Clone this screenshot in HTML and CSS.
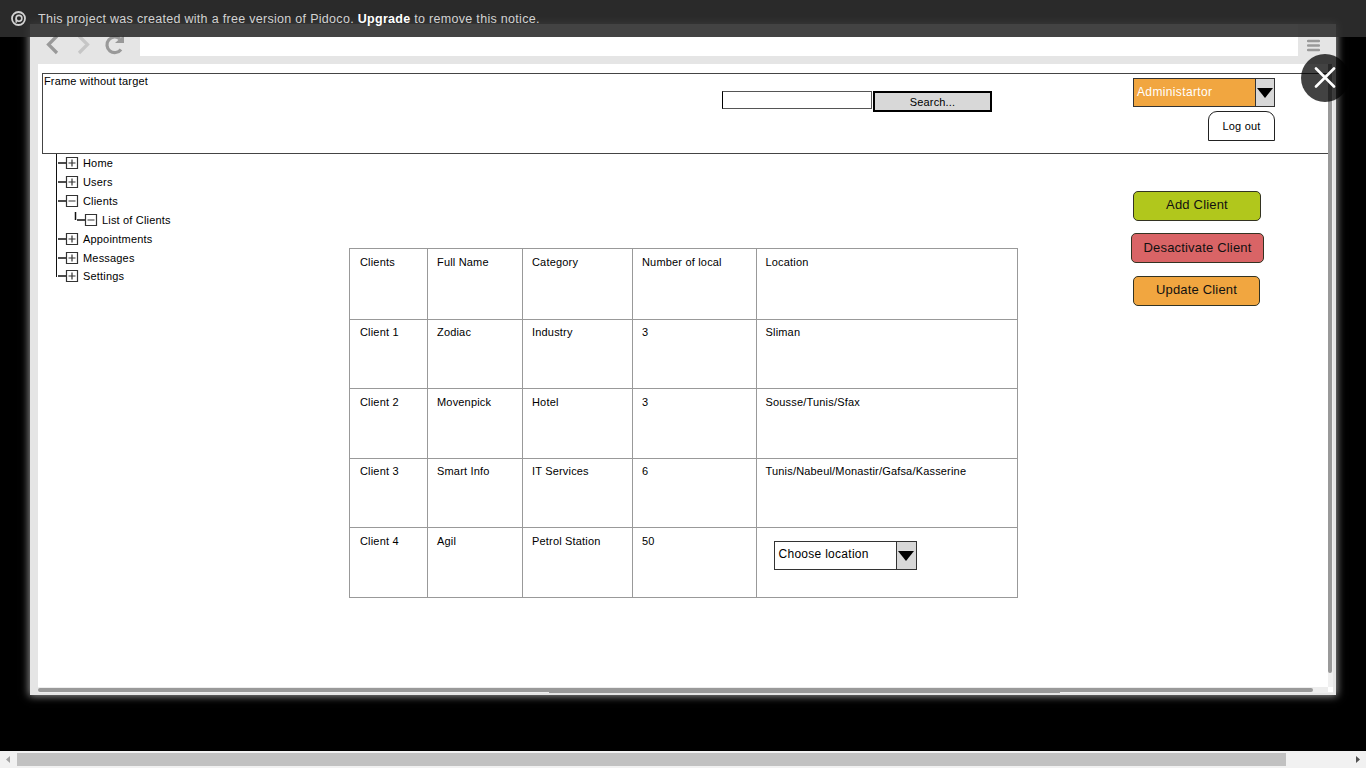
FILE: index.html
```html
<!DOCTYPE html>
<html lang="en">
<head>
<meta charset="utf-8">
<title>Clients</title>
<link rel="stylesheet" href="styles.css">
</head>
<body>
<div class="notice">
  <svg class="logo" width="16" height="16" viewBox="0 0 16 16" fill="none" stroke="#d2d2d2"><circle cx="7.500" cy="7.500" r="6.500" stroke-width="1.800"/><circle cx="8" cy="7.300" r="2.900" stroke-width="1.600"/><path d="M5.200 7.300v4.500" stroke-width="1.500"/></svg>
  <p>This project was created with a free version of Pidoco. <b>Upgrade</b> to remove this notice.</p>
</div>
<div class="stage">
  <div class="window">
    <div class="toolbar">
      <svg class="nav" width="80" height="22" viewBox="0 0 80 22" fill="none" stroke-width="3.200"><path d="M11 3L2.500 11.500l8.500 8.500" stroke="#999"/><path d="M33 3l8.500 8.500L33 20" stroke="#c6c6c6"/><path d="M74 6A7.800 7.800 0 1 0 75 16.500" stroke="#999"/><path d="M78 2v8h-9z" fill="#999"/></svg>
      <div class="address"></div>
      <svg class="menu" width="13" height="13" viewBox="0 0 13 13" stroke="#999" stroke-width="2.4" stroke-linecap="round"><path d="M1 2h11M1 6.5h11M1 11h11"/></svg>
    </div>
    <div class="view">
      <main class="page">
        <header class="frame">
          <span class="frame-title">Frame without target</span>
          <div class="search"><div class="field"></div><div class="search-button"><span>Search...</span></div></div>
          <div class="account">
            <div class="select user"><span>Administartor</span><i><svg width="16" height="10" viewBox="0 0 16 10"><path d="M0 0h16L8 10z"/></svg></i></div>
            <div class="logout">Log out</div>
          </div>
        </header>
        <div class="body">
          <ul class="tree">
            <li><svg width="22" height="14" viewBox="0 0 22 14"><path class="dash" d="M1 7h9"/><path d="M9.5 1.5h11v11h-11zM11.500 7h7M15 3.500v7"/></svg>Home</li>
            <li><svg width="22" height="14" viewBox="0 0 22 14"><path class="dash" d="M1 7h9"/><path d="M9.5 1.5h11v11h-11zM11.500 7h7M15 3.500v7"/></svg>Users</li>
            <li><svg width="22" height="14" viewBox="0 0 22 14"><path class="dash" d="M1 7h9"/><path d="M9.5 1.5h11v11h-11zM11.500 7h7"/></svg>Clients</li>
            <li class="child"><svg width="24" height="14" viewBox="0 0 24 14" overflow="visible"><path class="dash" d="M1.500 -1v8M3 7h9"/><path d="M11.500 1.500h11v11h-11zM13.500 7h7"/></svg>List of Clients</li>
            <li><svg width="22" height="14" viewBox="0 0 22 14"><path class="dash" d="M1 7h9"/><path d="M9.5 1.5h11v11h-11zM11.500 7h7M15 3.500v7"/></svg>Appointments</li>
            <li><svg width="22" height="14" viewBox="0 0 22 14"><path class="dash" d="M1 7h9"/><path d="M9.5 1.5h11v11h-11zM11.500 7h7M15 3.500v7"/></svg>Messages</li>
            <li><svg width="22" height="14" viewBox="0 0 22 14"><path class="dash" d="M1 7h9"/><path d="M9.5 1.5h11v11h-11zM11.500 7h7M15 3.500v7"/></svg>Settings</li>
          </ul>
          <div class="grid">
            <div>Clients</div><div>Full Name</div><div>Category</div><div>Number of local</div><div>Location</div>
            <div>Client 1</div><div>Zodiac</div><div>Industry</div><div>3</div><div>Sliman</div>
            <div>Client 2</div><div>Movenpick</div><div>Hotel</div><div>3</div><div>Sousse/Tunis/Sfax</div>
            <div>Client 3</div><div>Smart Info</div><div>IT Services</div><div>6</div><div>Tunis/Nabeul/Monastir/Gafsa/Kasserine</div>
            <div>Client 4</div><div>Agil</div><div>Petrol Station</div><div>50</div>
            <div class="choose"><div class="select"><span>Choose location</span><i><svg width="16" height="10" viewBox="0 0 16 10"><path d="M0 0h16L8 10z"/></svg></i></div></div>
          </div>
          <div class="actions">
            <div class="action add">Add Client</div>
            <div class="action off">Desactivate Client</div>
            <div class="action update">Update Client</div>
          </div>
        </div>
      </main>
      <div class="vbar"><div class="vthumb"></div></div>
    </div>
    <div class="hbar"><div class="hthumb"></div><div class="corner"></div></div>
    <div class="hthumb-wide"></div>
  </div>
  <div class="close"><svg width="22" height="22" viewBox="0 0 22 22"><path d="M2 1.500l18 18M20 1.500L2 19.500" stroke="#fff" stroke-width="2.600" stroke-linecap="round"/></svg></div>
</div>
<div class="scrollbar">
  <svg width="17" height="17" viewBox="0 0 17 17"><path d="M10 5v7L6 8.500z" fill="#a3a3a3"/></svg>
  <div class="thumb"></div>
  <svg width="17" height="17" viewBox="0 0 17 17"><path d="M7 5v7l4-3.500z" fill="#505050"/></svg>
</div>
</body>
</html>
```
FILE: styles.css
```css
* { box-sizing: border-box; }
body {
  margin: 0;
  width: 1366px;
  height: 768px;
  overflow: hidden;
  background: #000;
  font-family: "Liberation Sans", Arial, sans-serif;
  font-size: 11px;
  letter-spacing: .18px;
  color: #000;
}
svg { display: block; flex: none; }
.notice {
  position: absolute;
  z-index: 2;
  top: 0;
  left: 0;
  width: 1366px;
  height: 37px;
  padding-left: 11px;
  display: flex;
  align-items: center;
  background: rgba(47, 47, 47, .9);
  color: #d2d2d2;
  font-size: 12.500px;
  letter-spacing: .3px;
}
.notice p { margin: 0 0 0 11px; white-space: nowrap; }
.notice b { color: #fff; }
.stage { height: 751px; padding: 24px 0 0 30px; overflow: hidden; }
.window {
  position: relative;
  width: 1306px;
  height: 671px;
  padding: 0 3px 0 8px;
  background: #e5e5e5;
  box-shadow: 0 0 8px 1px rgba(255, 255, 255, .6);
}
.toolbar { height: 40px; display: flex; }
.nav { margin: 9px 14px 0 8px; }
.address { width: 1158px; height: 31.500px; background: #fff; }
.menu { margin: 15px 0 0 9px; }
.view { height: 623px; display: flex; }
.page { width: 1290px; background: #fff; padding: 9px 0 0 4px; }
.vbar { width: 5px; background: #f0f0f0; }
.vthumb { width: 4px; height: 609px; background: #999; border-radius: 0 0 2px 2px; }
.hbar { height: 6px; display: flex; background: #ededed; padding-top: 1px; }
.hthumb { width: 1275px; height: 4px; background: #999; border-radius: 2px; }
.corner { width: 5px; height: 5px; margin: -1px 0 0 15px; background: #fff; }
.hthumb-wide { width: 511px; height: 1px; margin: -1px 0 0 511px; position: relative; background: #999; }
.frame {
  height: 81px;
  display: flex;
  border: 1px solid #444;
  border-right: 0;
}
.frame-title { width: 679px; padding: 1px 0 0 1px; line-height: 13px; letter-spacing: .15px; }
.search { display: flex; margin-top: 17px; gap: 1px; width: 411px; }
.field { width: 150px; height: 18px; border: 1px solid #555; border-left-color: #000; }
.search-button {
  width: 119px;
  height: 21px;
  border: 2px solid #000;
  background: #d8d8d8;
  text-align: center;
  line-height: 18px;
}
.account { width: 142px; padding-top: 4px; display: flex; flex-direction: column; align-items: flex-end; gap: 4px; }
.select {
  width: 143px;
  height: 29px;
  flex: none;
  display: flex;
  border: 1px solid #333;
  font-size: 12px;
  letter-spacing: .28px;
  line-height: 25px;
}
.select span { flex: 1; padding-left: 4px; white-space: nowrap; }
.select i {
  width: 20px;
  border-left: 1px solid #333;
  background: #d8d8d8;
  display: flex;
  align-items: center;
  justify-content: center;
}
.user { width: 142px; background: #f1a640; color: #fff; letter-spacing: .36px; line-height: 26px; }
.user span { padding-left: 3px; }
.user i { width: 19px; }
.logout {
  width: 67px;
  height: 30px;
  border: 1px solid #222;
  border-radius: 9px 9px 0 0;
  text-align: center;
  line-height: 29px;
}
.body { display: flex; align-items: flex-start; }
.tree {
  list-style: none;
  margin: 0 0 0 14px;
  padding: 0;
  width: 293px;
  background: linear-gradient(#111, #111) 0 0 / 1px 123px no-repeat;
}
.tree li { height: 18.850px; display: flex; align-items: center; gap: 4px; padding-left: 1px; }
.tree .child { padding-left: 18px; }
.tree path { fill: none; stroke: #333; stroke-width: 1.200; }
.tree .dash { stroke: #111; stroke-width: 1.500; }
.grid {
  margin-top: 94px;
  display: grid;
  grid-template-columns: 78px 95px 110px 123.500px 261.500px;
  grid-template-rows: 71px 69px 70px 69px 70px;
  border-top: 1px solid #999;
  border-left: 1px solid #999;
  width: 669px;
}
.grid > div {
  border-right: 1px solid #999;
  border-bottom: 1px solid #999;
  padding: 6px 0 0 9px;
  line-height: 13px;
  white-space: nowrap;
}
.grid > div:nth-child(5n+1) { padding-left: 10px; }
.grid > div:nth-child(-n+5) { padding-top: 7px; }
.grid > div:nth-child(n+11):nth-child(-n+15) { padding-top: 7px; }
.grid > div:nth-child(n+21) { padding-top: 7px; }
.grid > div.choose:last-child { padding: 13px 0 0 17px; }
.actions { margin: 37px 0 0 113px; width: 133px; display: flex; flex-direction: column; align-items: flex-start; gap: 12.400px; }
.action {
  height: 30px;
  border: 1px solid #332;
  border-radius: 5px;
  text-align: center;
  font-size: 13px;
  line-height: 26px;
  color: #111;
}
.add { width: 128px; margin-left: 2px; background: #b1c71c; }
.off { width: 133px; line-height: 28px; background: #d96466; }
.update { width: 127px; margin-left: 2px; background: #f1a640; }
.close {
  position: absolute;
  left: 1301px;
  top: 54px;
  width: 48px;
  height: 48px;
  border-radius: 50%;
  background: rgba(0, 0, 0, .74);
  display: flex;
  align-items: center;
  justify-content: center;
}
.scrollbar { height: 17px; display: flex; background: #f1f1f1; }
.thumb { width: 1269px; height: 13px; margin: 2px 63px 0 0; background: #c1c1c1; }
```
